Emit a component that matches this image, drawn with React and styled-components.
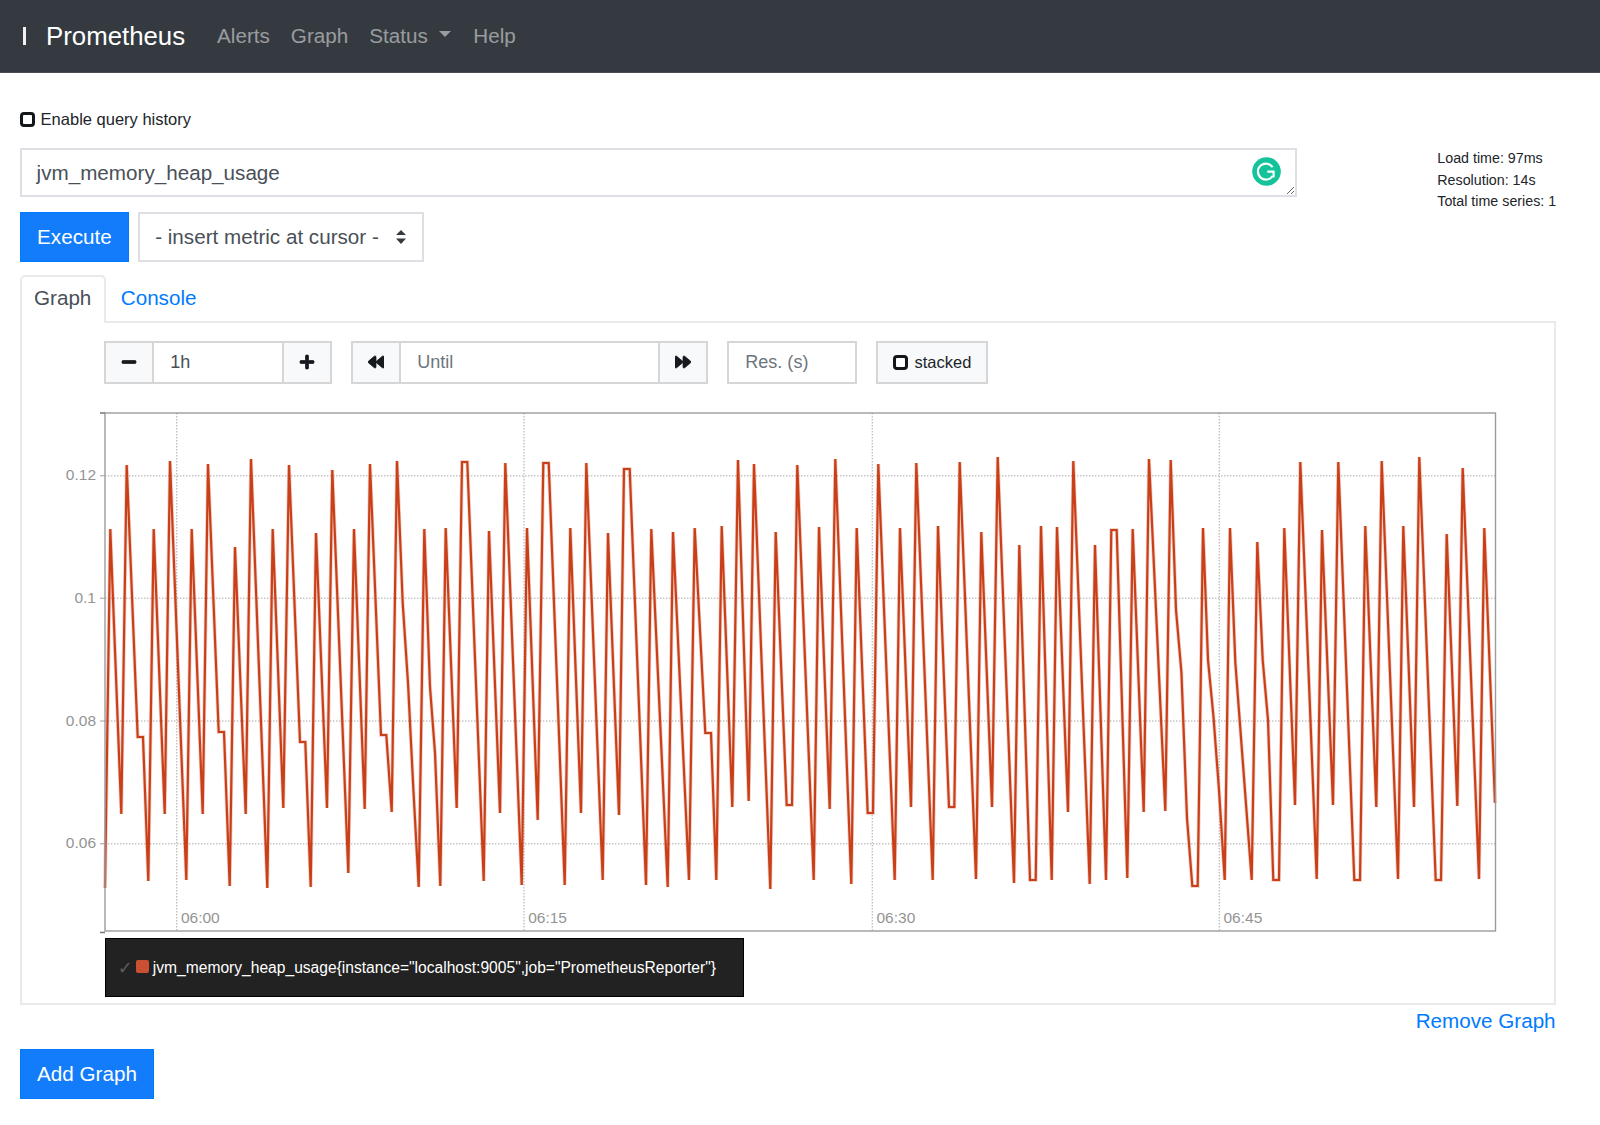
import React from "react";
import styled, { createGlobalStyle } from "styled-components";
import { FaMinus, FaPlus, FaBackward, FaForward } from "react-icons/fa";

const GlobalStyle = createGlobalStyle`
  html, body {
    margin: 0;
    padding: 0;
    background: #fff;
    color: #212529;
    font-family: "Liberation Sans", Arial, sans-serif;
    font-size: 20.65px;
  }
  * {
    box-sizing: border-box;
  }
`;

// page coordinates of the series, x then y
const SERIES = [
  [105, 888], [110.3, 529], [121.3, 814], [126.7, 465], [137.7, 737], [143, 737], [148.3, 881], [153.7, 529],
  [164.7, 814], [170, 461], [186.3, 880], [191.7, 529], [202.7, 814], [208, 464], [218.7, 732], [224, 732],
  [229.7, 886], [235, 547], [245.7, 814], [251, 459], [267.3, 888], [272.7, 529], [283.3, 808], [289, 465],
  [300, 742], [305.3, 742], [310.7, 887], [316, 533], [327, 808], [332.3, 470], [348.3, 873], [354, 529],
  [364.7, 809], [370, 464], [381, 735], [386.3, 735], [391.7, 812], [397, 461], [402.7, 603], [408, 683],
  [413.4, 790], [418.7, 887], [424.3, 529], [430, 687], [435, 753], [440.3, 886], [445.7, 528], [456.7, 808],
  [462, 462], [467.3, 462], [483.7, 881], [489, 531], [500, 813], [505.3, 463], [521.7, 885], [527, 528],
  [537.7, 820], [543.3, 463], [548.7, 463], [564.7, 885], [570.3, 528], [581, 813], [586.3, 463], [602.7, 880],
  [608, 533], [619, 815], [624, 469], [629.7, 469], [646, 885], [651.3, 529], [667.7, 887], [673, 532],
  [689, 880], [694.7, 528], [705.3, 733], [711, 733], [716.3, 880], [721.7, 526], [732.3, 807], [738, 460],
  [748.7, 801], [754, 464], [770.3, 889], [775.7, 532], [786.7, 805], [792, 805], [797.3, 465], [813.7, 880],
  [819, 527], [829.7, 809], [835.3, 459], [851.3, 884], [856.7, 528], [867.7, 813], [873, 813], [878.3, 464],
  [894.7, 880], [900, 528], [911, 807], [916.3, 463], [932.7, 880], [938, 526], [949, 807], [954.3, 807],
  [959.7, 462], [976, 879], [981.3, 532], [992, 807], [997.7, 457], [1014, 883], [1019.3, 545], [1030, 880],
  [1035.7, 880], [1041, 526], [1051.7, 880], [1057, 527], [1068, 812], [1073.3, 461], [1089.7, 884], [1095, 545],
  [1106, 880], [1111.3, 530], [1116.7, 530], [1127.3, 878], [1132.7, 529], [1143.7, 812], [1149, 459], [1165.3, 811],
  [1170.7, 460], [1176, 610], [1181.4, 672], [1187, 818], [1192.3, 886], [1197.7, 886], [1203, 528], [1208, 660],
  [1213.5, 717], [1219, 790], [1224.7, 880], [1230, 528], [1235.3, 662], [1251.7, 880], [1257.3, 542], [1262.7, 660],
  [1268, 720], [1273.3, 880], [1279, 880], [1284.3, 528], [1295, 805], [1300.3, 462], [1316.7, 879], [1322, 530],
  [1333, 805], [1338.3, 462], [1354.3, 880], [1360, 880], [1365.3, 526], [1376.3, 807], [1381.7, 461], [1398, 879],
  [1403.3, 526], [1414, 807], [1419.3, 457], [1435.7, 880], [1441, 880], [1446.7, 534], [1457.3, 806], [1462.7, 468],
  [1479, 879], [1484.3, 528], [1495, 803],
];

const Y_TICKS = [
  { y: 475.7, label: "0.12" },
  { y: 598.3, label: "0.1" },
  { y: 721, label: "0.08" },
  { y: 843.7, label: "0.06" },
];

const X_TICKS = [
  { x: 176.7, label: "06:00" },
  { x: 524, label: "06:15" },
  { x: 872.3, label: "06:30" },
  { x: 1219.3, label: "06:45" },
];

const PLOT = { left: 105, top: 413, right: 1495.5, bottom: 931 };

const Nav = styled.nav`
  height: 72.5px;
  background: #343a40;
  border-bottom: 1px solid #4a4f55;
  display: flex;
  align-items: center;
  padding-left: 23px;
`;

const BrokenLogo = styled.span`
  width: 2.5px;
  height: 18px;
  background: #f2f2f2;
  margin-right: 20.5px;
`;

const Brand = styled.a`
  color: #fff;
  font-size: 25.8px;
  margin: 2px 21.5px 0 0;
`;

const NavLink = styled.a`
  color: rgba(255, 255, 255, 0.5);
  padding: 1px 10.5px 0;
  display: flex;
  align-items: center;
`;

const Caret = styled.span`
  width: 0;
  height: 0;
  margin: -5px 1.5px 0 11px;
  border-top: 6px solid rgba(255, 255, 255, 0.5);
  border-left: 6.4px solid transparent;
  border-right: 6.4px solid transparent;
`;

const Main = styled.main`
  padding: 0 44.4px 0 19.6px;
`;

const HistoryLabel = styled.label`
  display: flex;
  align-items: center;
  gap: 6px;
  height: 20px;
  margin-top: 37px;
  margin-bottom: 18.8px;
  font-size: 16.5px;
`;

const Check = styled.input`
  appearance: none;
  margin: 0;
  width: 15px;
  height: 15px;
  border: 3px solid #14171a;
  border-radius: 4px;
  background: #fff;
  flex: none;
`;

const QueryRow = styled.div`
  display: flex;
  justify-content: space-between;
  align-items: flex-start;
`;

const QueryColumn = styled.div`
  width: 1277.4px;
`;

const QueryBox = styled.div`
  position: relative;
  height: 48.7px;
`;

const QueryInput = styled.textarea`
  display: block;
  width: 100%;
  height: 100%;
  padding: 9px 15px;
  border: 2px solid #dcdfe4;
  border-radius: 0;
  outline: none;
  resize: vertical;
  color: #495057;
  font-family: inherit;
  font-size: 20.65px;
  line-height: 28px;
`;

const GrammarlyBadge = styled.svg`
  position: absolute;
  right: 16.4px;
  top: 8.7px;
  width: 29px;
  height: 29px;
`;

const ExecuteRow = styled.div`
  display: flex;
  gap: 9.2px;
  margin-top: 15.3px;
`;

const PrimaryButton = styled.button`
  height: 49.4px;
  padding: 0 16.5px;
  border: 1px solid #007bff;
  border-radius: 0;
  background: #127cfb;
  color: #fff;
  font-family: inherit;
  font-size: 20.65px;
`;

const SelectWrap = styled.div`
  position: relative;
  width: 285.5px;
  height: 49.4px;
`;

const MetricSelect = styled.select`
  appearance: none;
  width: 100%;
  height: 100%;
  padding: 0 0 0 14.8px;
  border: 2px solid #dcdfe4;
  border-radius: 0;
  background: #fff;
  color: #495057;
  font-family: inherit;
  font-size: 20.65px;
`;

const SelectArrows = styled.svg`
  position: absolute;
  right: 17.5px;
  top: 17.8px;
  width: 10px;
  height: 14px;
  pointer-events: none;
`;

const Stats = styled.div`
  width: 118.3px;
  font-size: 14.25px;
  line-height: 21.4px;
  white-space: nowrap;
`;

const Tabs = styled.div`
  display: flex;
  height: 45.4px;
  margin-top: 13.6px;
  position: relative;
  z-index: 1;
`;

const Tab = styled.a`
  display: flex;
  align-items: center;
  height: ${(p) => (p.$active ? "47.4px" : "45.4px")};
  padding: ${(p) => (p.$active ? "0 12.4px 3px" : "0 15px")};
  color: ${(p) => (p.$active ? "#495057" : "#007bff")};
  background: ${(p) => (p.$active ? "#fff" : "transparent")};
  border: ${(p) => (p.$active ? "2px solid #e8eaed" : "none")};
  border-bottom: none;
  border-radius: 5px 5px 0 0;
`;

const Panel = styled.section`
  height: 684.6px;
  border: 2px solid #e8eaed;
  padding-top: 18.5px;
`;

const Controls = styled.div`
  display: flex;
  height: 42.4px;
  margin-left: 82.7px;
`;

const ControlGroup = styled.div`
  display: flex;
  margin-right: ${(p) => p.$gap}px;
  border: 2px solid #d6d6d6;
`;

const IconButton = styled.button`
  display: flex;
  align-items: center;
  justify-content: center;
  width: 48px;
  padding: 0;
  border: none;
  border-left: ${(p) => (p.$divider === "left" ? "2px solid #d6d6d6" : "none")};
  border-right: ${(p) => (p.$divider === "right" ? "2px solid #d6d6d6" : "none")};
  background: #f8f9fa;
  color: #16191d;
  font-size: 16px;
  svg {
    stroke: currentColor;
    stroke-width: 24px;
  }
`;

const ControlInput = styled.input`
  width: ${(p) => p.$width}px;
  padding: 0 0 0 16px;
  border: none;
  outline: none;
  background: #fff;
  color: #495057;
  font-family: inherit;
  font-size: 18.06px;
  &::placeholder {
    color: #6c757d;
    opacity: 1;
  }
`;

const StackedLabel = styled.label`
  display: flex;
  align-items: center;
  gap: 6.3px;
  width: 111.7px;
  padding-left: 15px;
  border: 2px solid #d6d6d6;
  background: #f8f9fa;
  font-size: 16.5px;
`;

const Chart = styled.svg`
  display: block;
  width: 1440px;
  height: 526px;
  margin: 26.5px 0 0 38.4px;
`;

const TickText = styled.text`
  fill: #949494;
  font-size: 15.5px;
`;

const Legend = styled.div`
  display: flex;
  align-items: center;
  width: 639.1px;
  height: 59.4px;
  margin: 1.8px 0 0 83.4px;
  padding-left: 11.7px;
  border: 1px solid #000;
  background: #222;
  color: #fff;
  font-size: 15.6px;
  white-space: nowrap;
`;

const LegendCheck = styled.span`
  flex: none;
  width: 18.5px;
  color: #5c5c5c;
  font-family: "DejaVu Sans", sans-serif;
  font-size: 18px;
`;

const LegendSwatch = styled.span`
  width: 13px;
  height: 13px;
  margin: -2px 3.7px 0 0;
  border-radius: 2px;
  background: #cb4f33;
  flex: none;
`;

const RemoveRow = styled.div`
  display: flex;
  justify-content: flex-end;
  height: 44px;
  line-height: 32px;
`;

const RemoveLink = styled.a`
  color: #007bff;
`;

function GrammarlyIcon() {
  return (
    <GrammarlyBadge viewBox="0 0 29 29">
      <circle cx="14.5" cy="14.5" r="14.3" fill="#15c39a" />
      <path
        d="M20.6 10.2 A8 8 0 1 0 20.6 19 M15.3 14.6 H21.6 V20.4"
        fill="none"
        stroke="#fff"
        strokeWidth="2.1"
      />
    </GrammarlyBadge>
  );
}

function GraphChart() {
  const line = SERIES.map((p) => p.join(",")).join(" ");
  return (
    <Chart viewBox="60 410 1440 526">
      {Y_TICKS.map((t) => (
        <g key={t.label}>
          <line x1={PLOT.left} x2={PLOT.right} y1={t.y} y2={t.y} stroke="#c4c4c4" strokeWidth="1.4" strokeDasharray="1.4 1.6" />
          <line x1="100" x2={PLOT.left} y1={t.y} y2={t.y} stroke="#bbb" strokeWidth="1.4" />
          <TickText x="96" y={t.y + 4.6} textAnchor="end">{t.label}</TickText>
        </g>
      ))}
      {X_TICKS.map((t) => (
        <g key={t.label}>
          <line x1={t.x} x2={t.x} y1={PLOT.top} y2={PLOT.bottom} stroke="#bdbdbd" strokeWidth="1.3" strokeDasharray="1.4 1.6" />
          <TickText x={t.x + 4.2} y={PLOT.bottom - 7.6}>{t.label}</TickText>
        </g>
      ))}
      <polyline points={line} fill="none" stroke="#cb4a2a" strokeOpacity="0.25" strokeWidth="3.8" strokeLinejoin="miter" />
      <polyline points={line} fill="none" stroke="#c93f18" strokeWidth="2.2" strokeLinejoin="miter" />
      <rect x={PLOT.left} y={PLOT.top} width={PLOT.right - PLOT.left} height={PLOT.bottom - PLOT.top} fill="none" stroke="#9c9c9c" strokeWidth="1.4" />
      <path d="M100 413 H105 M100 932.5 H105" stroke="#777" strokeWidth="1.4" />
    </Chart>
  );
}

export default function App() {
  return (
    <>
      <GlobalStyle />
      <Nav>
        <BrokenLogo />
        <Brand>Prometheus</Brand>
        <NavLink>Alerts</NavLink>
        <NavLink>Graph</NavLink>
        <NavLink>
          Status
          <Caret />
        </NavLink>
        <NavLink>Help</NavLink>
      </Nav>
      <Main>
        <HistoryLabel>
          <Check type="checkbox" />
          Enable query history
        </HistoryLabel>
        <QueryRow>
          <QueryColumn>
            <QueryBox>
              <QueryInput defaultValue="jvm_memory_heap_usage" spellCheck={false} />
              <GrammarlyIcon />
            </QueryBox>
            <ExecuteRow>
              <PrimaryButton>Execute</PrimaryButton>
              <SelectWrap>
                <MetricSelect>
                  <option>- insert metric at cursor -</option>
                </MetricSelect>
                <SelectArrows viewBox="0 0 10 14">
                  <path d="M5 0 L10 5 H0 Z M0 8.5 H10 L5 14 Z" fill="#343a40" />
                </SelectArrows>
              </SelectWrap>
            </ExecuteRow>
          </QueryColumn>
          <Stats>
            <div>Load time: 97ms</div>
            <div>Resolution: 14s</div>
            <div>Total time series: 1</div>
          </Stats>
        </QueryRow>
        <Tabs>
          <Tab $active>Graph</Tab>
          <Tab>Console</Tab>
        </Tabs>
        <Panel>
          <Controls>
            <ControlGroup $gap={19.6}>
              <IconButton $divider="right"><FaMinus /></IconButton>
              <ControlInput $width={127.4} defaultValue="1h" />
              <IconButton $divider="left"><FaPlus /></IconButton>
            </ControlGroup>
            <ControlGroup $gap={19.3}>
              <IconButton $divider="right"><FaBackward /></IconButton>
              <ControlInput $width={256.7} placeholder="Until" />
              <IconButton $divider="left"><FaForward /></IconButton>
            </ControlGroup>
            <ControlGroup $gap={19.6}>
              <ControlInput $width={125.4} placeholder="Res. (s)" />
            </ControlGroup>
            <StackedLabel>
              <Check type="checkbox" />
              stacked
            </StackedLabel>
          </Controls>
          <GraphChart />
          <Legend>
            <LegendCheck>✓</LegendCheck>
            <LegendSwatch />
            jvm_memory_heap_usage{'{'}instance="localhost:9005",job="PrometheusReporter"{'}'}
          </Legend>
        </Panel>
        <RemoveRow>
          <RemoveLink>Remove Graph</RemoveLink>
        </RemoveRow>
        <PrimaryButton>Add Graph</PrimaryButton>
      </Main>
    </>
  );
}
